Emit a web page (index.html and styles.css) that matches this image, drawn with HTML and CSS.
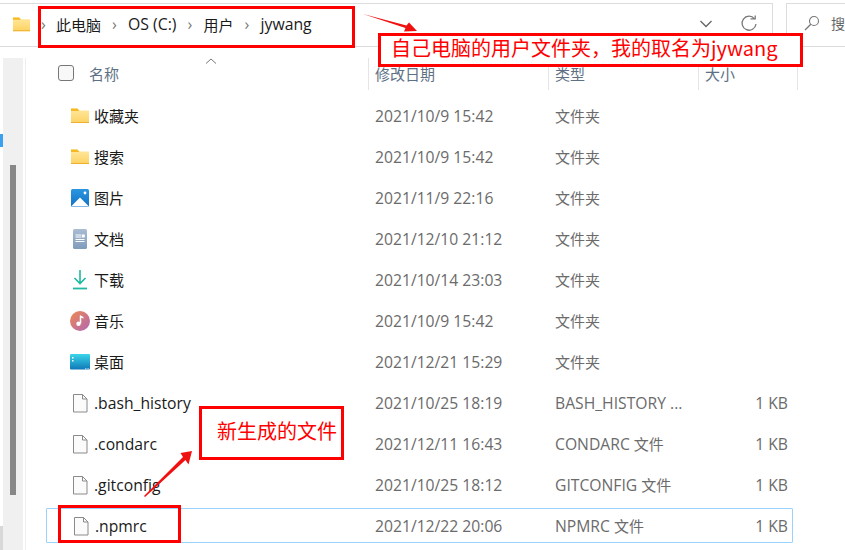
FILE: index.html
```html
<!DOCTYPE html>
<html lang="zh-CN">
<head>
<meta charset="utf-8">
<title>jywang</title>
<link rel="stylesheet" href="styles.css">
</head>
<body>
<div class="window">
  <svg class="defs" width="0" height="0">
    <defs>
      <linearGradient id="fold" x1="0" y1="0" x2="0" y2="1"><stop offset="0" stop-color="#ffe9a0"/><stop offset="1" stop-color="#fdd262"/></linearGradient>
      <linearGradient id="pic" x1="0" y1="0" x2="0" y2="1"><stop offset="0" stop-color="#2b96e0"/><stop offset="1" stop-color="#1272c4"/></linearGradient>
      <linearGradient id="doc" x1="0" y1="0" x2="0" y2="1"><stop offset="0" stop-color="#a9bdd3"/><stop offset="1" stop-color="#7f9cbc"/></linearGradient>
      <linearGradient id="mus" x1="0" y1="0" x2="1" y2="1"><stop offset="0" stop-color="#f08a4e"/><stop offset="1" stop-color="#b065b8"/></linearGradient>
      <linearGradient id="desk" x1="0" y1="0" x2="0" y2="1"><stop offset="0" stop-color="#3ad6ea"/><stop offset="1" stop-color="#0f78b8"/></linearGradient>
      <symbol id="i-folder" viewBox="0 0 20 20"><path d="M1 2.500h6l2 2h10v12.500H1z" fill="url(#fold)"/><path d="M1 2.500h6.500l2 2.500H1z" fill="#f5b924"/><path d="M1 16h18v1H1z" fill="#eeb02e"/></symbol>
      <symbol id="i-file" viewBox="0 0 20 20"><path d="M3.500 1.500h9l4.500 4.500v13h-13.500z" fill="#fbfbfb" stroke="#8a8a8a"/><path d="M12.500 1.500v4.500h4.500" fill="none" stroke="#8a8a8a"/></symbol>
    </defs>
  </svg>

  <header class="toolbar">
    <div class="address">
      <svg class="addr-folder"><use href="#i-folder"/></svg>
      <span class="chev">›</span>
      <span class="crumb">此电脑</span><span class="chev">›</span>
      <span class="crumb lat">OS (C:)</span><span class="chev">›</span>
      <span class="crumb">用户</span><span class="chev">›</span>
      <span class="crumb lat">jywang</span>
      <span class="spacer"></span>
      <svg class="drop" width="14" height="8" viewBox="0 0 14 8"><path d="M1.500 1l5.500 5.500L12.500 1" fill="none" stroke="#666" stroke-width="1.300"/></svg>
      <svg class="refresh" width="18" height="18" viewBox="0 0 18 18"><path d="M14.500 3.800A7 7 0 1 0 16 9" fill="none" stroke="#777" stroke-width="1.300"/><path d="M10.500 3.800h4.700V0.500" fill="none" stroke="#777" stroke-width="1.300"/></svg>
    </div>
    <div class="search">
      <svg width="16" height="16" viewBox="0 0 16 16"><circle cx="10" cy="6" r="4.500" fill="none" stroke="#777" stroke-width="1.100"/><path d="M6.800 9.200L1 15" stroke="#777" stroke-width="1.300"/></svg>
      <span class="search-text">搜</span>
    </div>
  </header>

  <div class="body">
    <aside class="rail"><div class="thumb"></div></aside>
    <main class="list">
      <div class="head">
        <div class="c-name head-name"><span class="check"></span><span>名称</span><svg class="sort" width="12" height="6" viewBox="0 0 12 6"><path d="M1 5.500L6 1l5 4.500" fill="none" stroke="#777"/></svg></div>
        <div class="c-date">修改日期</div>
        <div class="c-type">类型</div>
        <div class="c-size head-size">大小</div>
      </div>
      <div class="row"><div class="c-name"><svg class="ico"><use href="#i-folder"/></svg><span class="fname cjk">收藏夹</span></div><div class="c-date">2021/10/9 15:42</div><div class="c-type cjk">文件夹</div><div class="c-size"></div></div>
      <div class="row"><div class="c-name"><svg class="ico"><use href="#i-folder"/></svg><span class="fname cjk">搜索</span></div><div class="c-date">2021/10/9 15:42</div><div class="c-type cjk">文件夹</div><div class="c-size"></div></div>
      <div class="row"><div class="c-name"><svg class="ico" viewBox="0 0 20 20"><rect x="1" y="1" width="18" height="18" rx="1.500" fill="url(#pic)"/><path d="M1 18.500L10 9.500l9 9z" fill="#fff"/><circle cx="15" cy="5" r="1.400" fill="#fff"/></svg><span class="fname cjk">图片</span></div><div class="c-date">2021/11/9 22:16</div><div class="c-type cjk">文件夹</div><div class="c-size"></div></div>
      <div class="row"><div class="c-name"><svg class="ico" viewBox="0 0 20 20"><rect x="3" y="0" width="14" height="20" rx="1.500" fill="url(#doc)"/><path d="M5.500 6h6M5.500 8h6M5.500 10.500h9M5.500 12.500h9" stroke="#fff" stroke-width="1"/><rect x="12" y="5.500" width="2.800" height="3" fill="#fff"/></svg><span class="fname cjk">文档</span></div><div class="c-date">2021/12/10 21:12</div><div class="c-type cjk">文件夹</div><div class="c-size"></div></div>
      <div class="row"><div class="c-name"><svg class="ico" viewBox="0 0 20 20"><path d="M10 0v13M4.500 8l5.500 5.500L15.500 8" fill="none" stroke="#1fb89f" stroke-width="1.600"/><path d="M3 18.500h14" stroke="#1fb8a5" stroke-width="1.800"/></svg><span class="fname cjk">下载</span></div><div class="c-date">2021/10/14 23:03</div><div class="c-type cjk">文件夹</div><div class="c-size"></div></div>
      <div class="row"><div class="c-name"><svg class="ico" viewBox="0 0 20 20"><circle cx="10" cy="10" r="10" fill="url(#mus)"/><path d="M10.500 4.500v8" stroke="#fff" stroke-width="1.500"/><path d="M10.500 4.500l3 1.500v1.500l-3-1z" fill="#fff"/><circle cx="8.500" cy="12.800" r="2.200" fill="#fff"/></svg><span class="fname cjk">音乐</span></div><div class="c-date">2021/10/9 15:42</div><div class="c-type cjk">文件夹</div><div class="c-size"></div></div>
      <div class="row"><div class="c-name"><svg class="ico" viewBox="0 0 20 20"><rect x="0" y="2" width="20" height="15.500" rx="1" fill="url(#desk)"/><rect x="2" y="5" width="1.500" height="1.500" fill="#fff"/><rect x="2" y="8" width="1.500" height="1.500" fill="#fff"/><path d="M15 16.800h4" stroke="#fff" stroke-width=".8" stroke-dasharray="1 .6"/></svg><span class="fname cjk">桌面</span></div><div class="c-date">2021/12/21 15:29</div><div class="c-type cjk">文件夹</div><div class="c-size"></div></div>
      <div class="row"><div class="c-name"><svg class="ico"><use href="#i-file"/></svg><span class="fname">.bash_history</span></div><div class="c-date">2021/10/25 18:19</div><div class="c-type">BASH_HISTORY ...</div><div class="c-size">1 KB</div></div>
      <div class="row"><div class="c-name"><svg class="ico"><use href="#i-file"/></svg><span class="fname">.condarc</span></div><div class="c-date">2021/12/11 16:43</div><div class="c-type">CONDARC <span class="cjk">文件</span></div><div class="c-size">1 KB</div></div>
      <div class="row"><div class="c-name"><svg class="ico"><use href="#i-file"/></svg><span class="fname">.gitconfig</span></div><div class="c-date">2021/10/25 18:12</div><div class="c-type">GITCONFIG <span class="cjk">文件</span></div><div class="c-size">1 KB</div></div>
      <div class="row selected"><div class="c-name"><svg class="ico"><use href="#i-file"/></svg><span class="fname">.npmrc</span></div><div class="c-date">2021/12/22 20:06</div><div class="c-type">NPMRC <span class="cjk">文件</span></div><div class="c-size">1 KB</div></div>
    </main>
  </div>

  <div class="edge edge-blue"></div>
  <div class="edge edge-gray"></div>
  <div class="mark mark-path"></div>
  <div class="mark mark-note-top">自己电脑的用户文件夹，我的取名为jywang</div>
  <div class="mark mark-note-new">新生成的文件</div>
  <div class="mark mark-file"></div>
  <svg class="arrows" width="845" height="550" viewBox="0 0 845 550">
    <path d="M363 14L406.500 25.500L409 22.500L417 31L404 31.500L405.500 28z" fill="#f01010"/>
    <path d="M144 496L183 457L180.500 453L192 451L188.500 464.500L185.500 460L145 497z" fill="#f01010"/>
  </svg>
</div>
</body>
</html>
```
FILE: styles.css
```css
* { box-sizing: border-box; }
html, body { margin: 0; padding: 0; }
body {
  width: 845px;
  height: 550px;
  overflow: hidden;
  background: #fff;
  font-family: "Open Sans", "Noto Sans CJK SC", sans-serif;
}
.window { position: relative; width: 845px; height: 550px; overflow: hidden; }
.defs { position: absolute; }

.toolbar { display: flex; gap: 13px; height: 44px; margin-top: 3px; }
.address {
  width: 774px;
  display: flex;
  align-items: center;
  padding: 0 12px 2px 12px;
  border: 1px solid #dcdcdc;
  border-left: 0;
}
.addr-folder { width: 19px; height: 19px; margin-right: 6px; }
.crumb { font-size: 15px; color: #1a1a1a; white-space: nowrap; }
.crumb.lat { font-size: 15.800px; }
.chev { width: 27px; text-align: center; color: #777; font-size: 16px; line-height: 1; }
.addr-folder + .chev { width: 13px; margin-right: 6px; }
.spacer { flex: 1; }
.drop { margin-right: 27px; }
.refresh { margin-right: 2px; }
.search {
  flex: 1;
  display: flex;
  align-items: center;
  gap: 11px;
  padding: 0 0 4px 17px;
  border: 1px solid #dcdcdc;
  border-right: 0;
}
.search-text { font-size: 14px; color: #666; }

.body { display: flex; height: 503px; margin-top: 11px; }
.rail {
  width: 20px;
  margin: 0 2px 0 3px;
  padding: 107px 0 0 7px;
  background: #f0f0f0;
  flex: none;
}
.thumb { width: 6px; height: 330px; background: #888; }
.list { flex: 1; border-left: 1px solid #eee; padding-left: 20px; }

.head { display: flex; align-items: center; height: 32px; color: #5e7184; font-size: 15px; }
.head > div { height: 32px; display: flex; align-items: center; padding-bottom: 2px; }
.head-name { position: relative; }
.head .c-date, .head .c-type, .head .c-size { border-left: 1px solid #e5e5e5; padding-left: 6px; }
.head .c-date { margin-left: -7px; width: 187px; }
.head .c-type { width: 150px; margin-left: -7px; }
.head .c-size { width: 100px; justify-content: flex-start; border-right: 1px solid #e5e5e5; }
.check {
  width: 16px; height: 16px; margin: 0 15px 0 12px;
  border: 1px solid #777; border-radius: 3px; background: #f8f8f8;
}
.sort { position: absolute; left: 159px; top: 0; }

.c-name { width: 329px; display: flex; align-items: center; flex: none; }
.c-date { width: 180px; flex: none; }
.c-type { width: 157px; flex: none; }
.c-size { width: 76px; flex: none; text-align: right; }

.row {
  display: flex;
  align-items: center;
  height: 41px;
  font-size: 15.700px;
  color: #6b6b6b;
  width: 747px;
}
.cjk { font-size: 15px; }
.head + .row { margin-top: 5px; }
.ico { width: 20px; height: 20px; margin: 0 4px 0 24px; flex: none; overflow: visible; }
.fname { color: #1a1a1a; white-space: nowrap; }
.selected {
  height: 35px;
  margin-top: 3px;
  border: 1px solid #99d1ff;
  border-radius: 1px;
}
.selected .c-name { width: 328px; }

.edge { position: absolute; left: 0; width: 3px; }
.edge-blue { top: 134px; height: 13px; background: #3ba0ee; border-top: 4px solid #3ba0ee; }
.edge-gray { top: 526px; height: 24px; background: #d8d8d8; }

.mark { position: absolute; border: 3px solid #f00; }
.mark-path { left: 38px; top: 6px; width: 317px; height: 42px; }
.mark-note-top {
  left: 378px; top: 33px; width: 425px; height: 34px;
  background: #fff; color: #f00; font-size: 20px; line-height: 24px; padding-left: 10px;
  font-family: "Noto Sans CJK SC", sans-serif; white-space: nowrap;
}
.mark-note-new {
  left: 199px; top: 406px; width: 145px; height: 54px;
  background: #fff; color: #f00; font-size: 20px; line-height: 44px; padding-left: 15px;
  font-family: "Noto Sans CJK SC", sans-serif; white-space: nowrap;
}
.mark-file { left: 58px; top: 505px; width: 123px; height: 38px; }
.arrows { position: absolute; left: 0; top: 0; pointer-events: none; }
```
